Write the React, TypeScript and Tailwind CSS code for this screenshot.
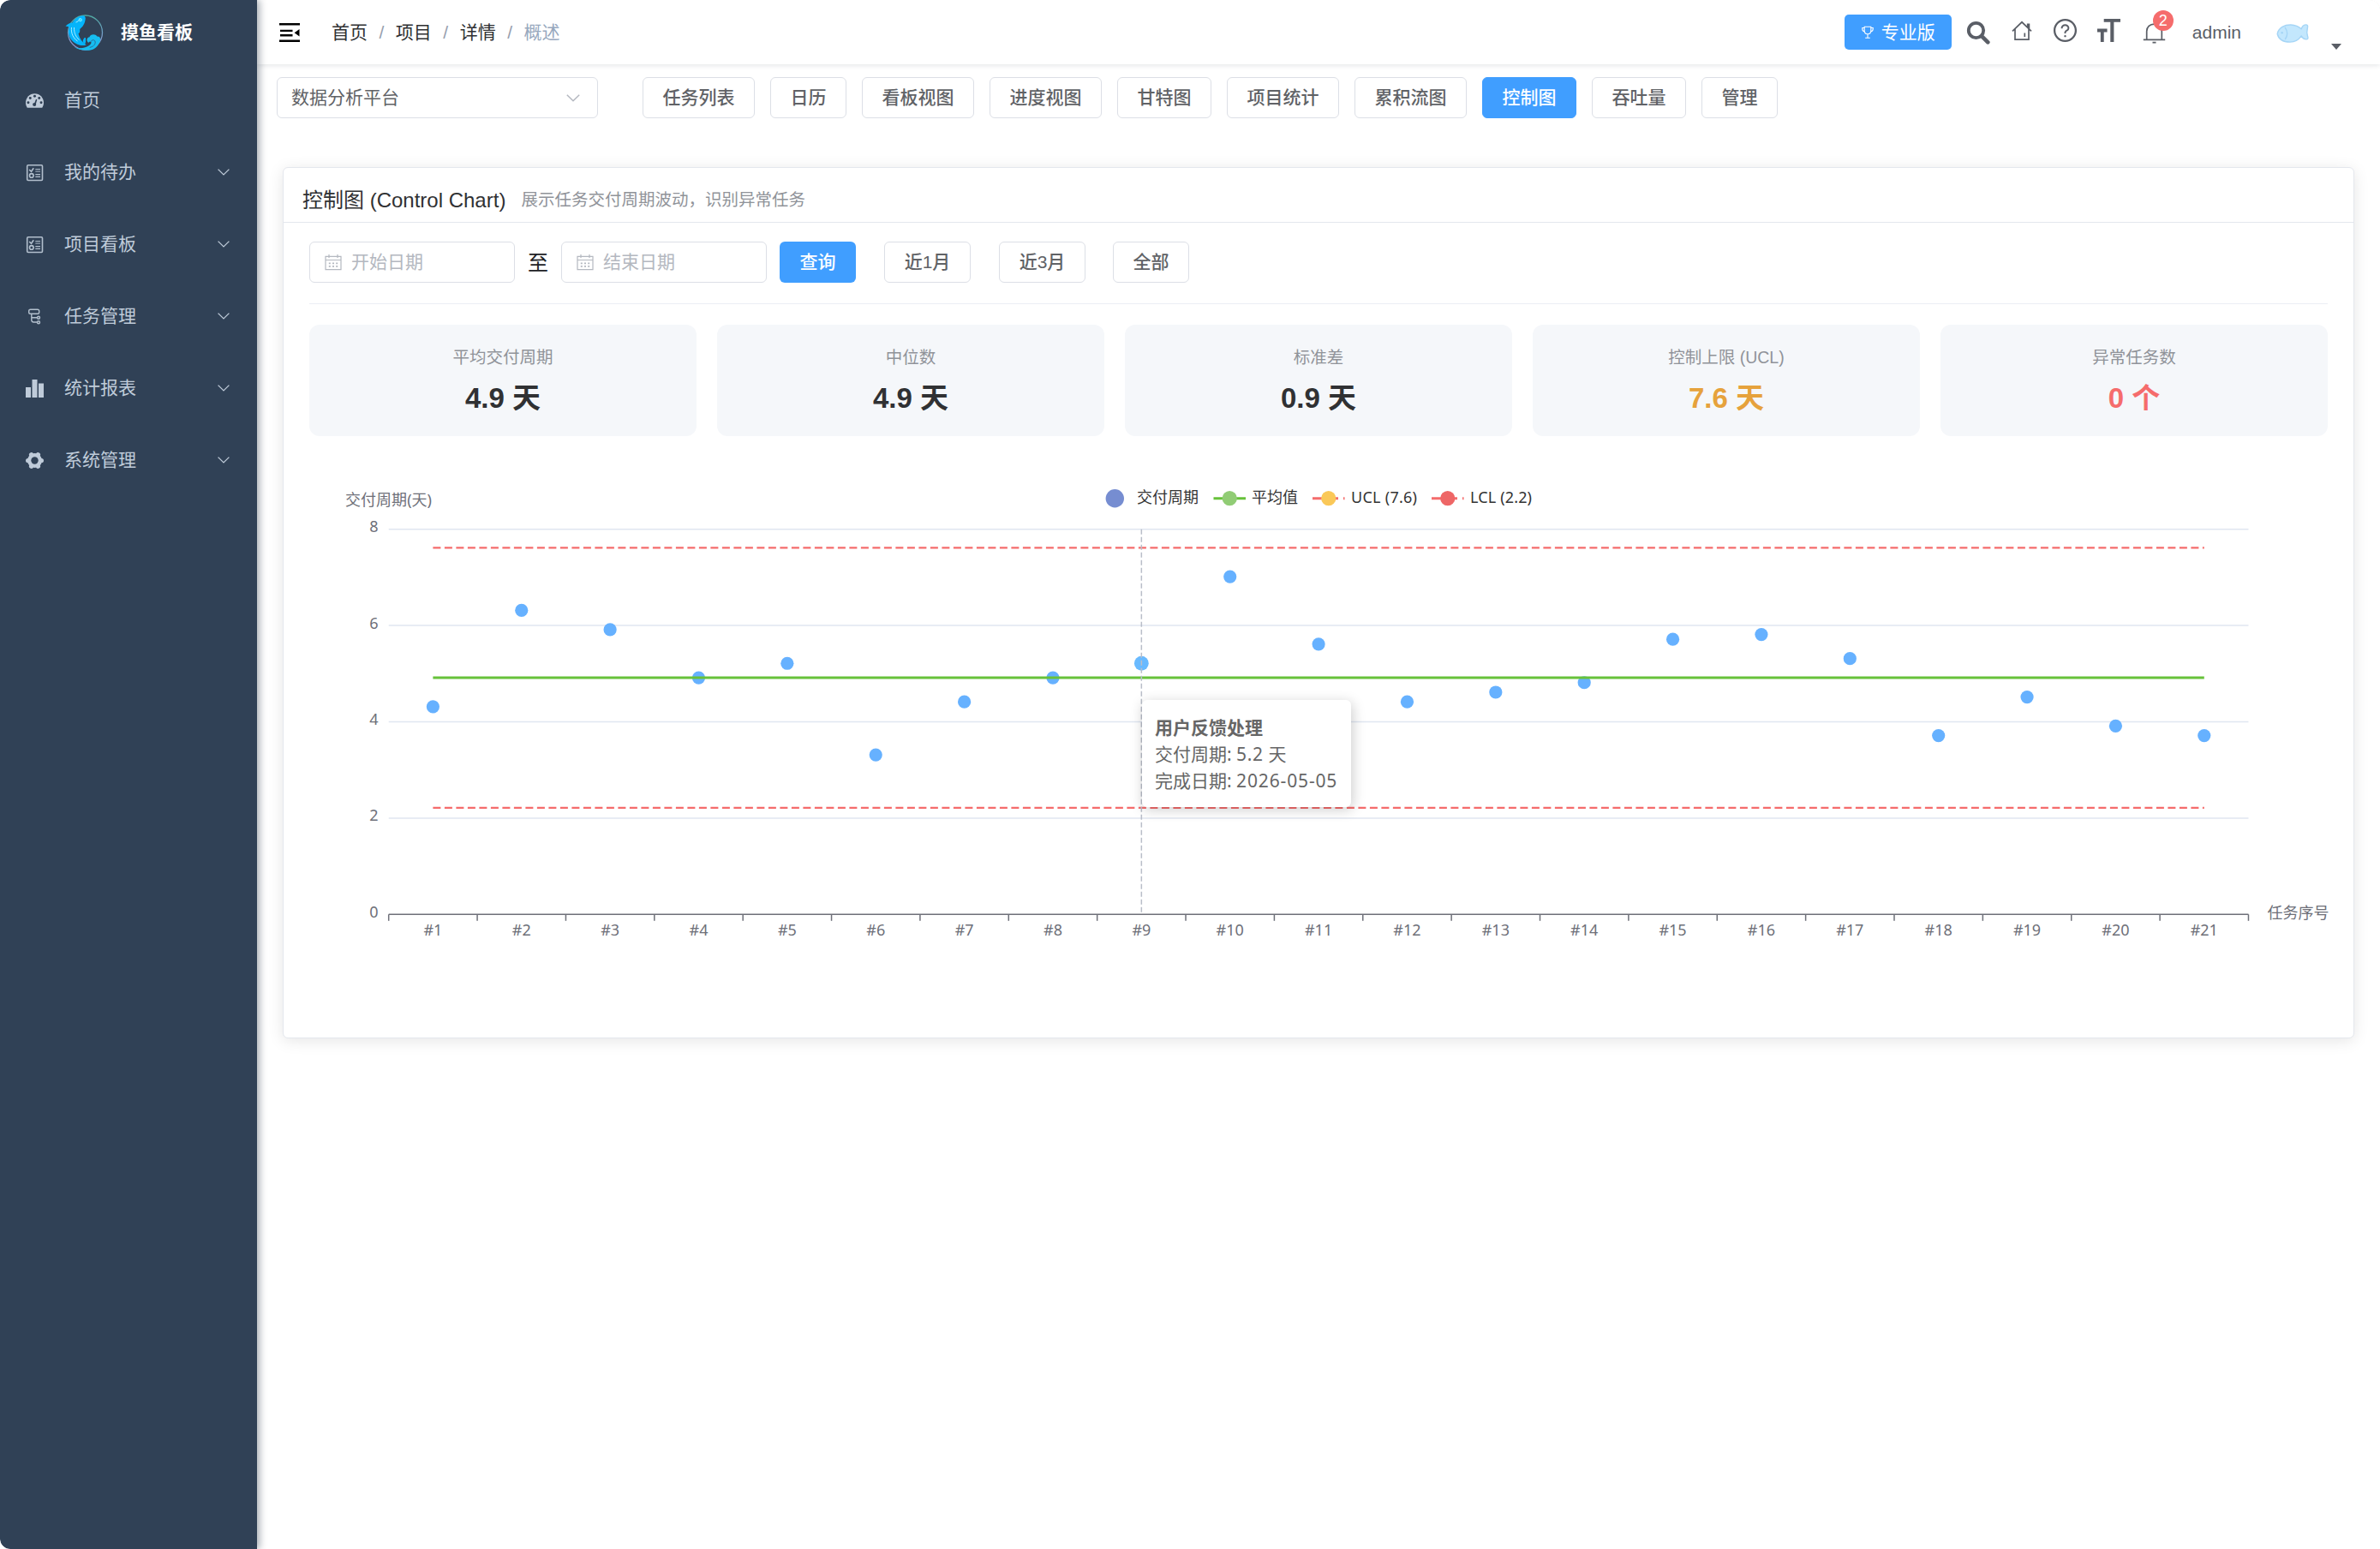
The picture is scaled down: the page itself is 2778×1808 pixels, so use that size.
import React from "react";
import { AiOutlineQuestionCircle } from "react-icons/ai";

const DashboardIcon = () => (
  <svg viewBox="0 0 128 100" className="h-[17px] w-[21px]">
    <path
      d="M128 64c0 12.500-3.300 23.500-9.900 34.300-.7 1.100-1.800 1.700-3.100 1.700H13c-1.300 0-2.400-.6-3.100-1.700C3.300 87.700 0 76.300 0 64 0 28.700 28.700 0 64 0s64 28.700 64 64z"
      fill="#bfcbd9"
    />
    <g fill="#304156">
      <circle cx="18" cy="63.600" r="9" />
      <circle cx="32" cy="32" r="9" />
      <circle cx="64" cy="18.500" r="9" />
      <circle cx="96" cy="32" r="9" />
      <circle cx="110" cy="63.600" r="9" />
      <circle cx="62" cy="77" r="12.500" />
      <path d="M73 40l8 2-10 35-11-3z" />
    </g>
  </svg>
);

const ChecklistIcon = () => (
  <svg viewBox="0 0 21 21" className="size-[21px]" fill="none" stroke="#b2bfcd" strokeWidth="1.600">
    <rect x="1.700" y="1.700" width="17.800" height="17.800" rx="1.200" />
    <path d="M4.200 7l2.300 2.300L9.200 5.200" />
    <circle cx="6.800" cy="13.900" r="2.300" />
    <path d="M11.300 6.500h5.700M11.300 9h5.700M11.300 12.700h5.700M11.300 15.300h5.700" strokeWidth="1.200" />
  </svg>
);

const TreeIcon = () => (
  <svg viewBox="0 0 21 21" className="size-[21px]" fill="none" stroke="#b2bfcd" strokeWidth="1.400">
    <rect x="3.700" y="2.200" width="12" height="5" rx="1.800" />
    <path d="M6.800 7.200v7.400q0 2.400 2.400 2.400h4M6.800 11.700h6.400" />
    <circle cx="15" cy="11.700" r="1.500" />
    <circle cx="15" cy="17.300" r="1.500" />
  </svg>
);

const BarsIcon = () => (
  <svg viewBox="0 0 128 128" className="size-[21px]" fill="#bfcbd9">
    <path d="M0 54.857h36.571V128H0V54.857zM91.429 27.430H128V128H91.429V27.429zM45.714 0h36.572v128H45.714V0z" />
  </svg>
);

const GearIcon = () => (
  <svg viewBox="0 0 21 21" className="size-[21px]" fill="#bfcbd9">
    <circle cx="10.500" cy="10.500" r="8.500" />
    <g stroke="#bfcbd9" strokeWidth="5.200" strokeLinecap="round">
      <path d="M2.600 10.500h15.800M6.550 3.660l7.900 13.680M14.450 3.660l-7.900 13.680" />
    </g>
    <circle cx="10.500" cy="10.500" r="4.200" fill="#304156" />
  </svg>
);

const Chevron = ({ className }: { className?: string }) => (
  <svg viewBox="0 0 14 8" className={className} fill="none" stroke="currentColor" strokeWidth="1.300">
    <path d="M.6.6L7 6.900 13.400.6" />
  </svg>
);

const LogoIcon = () => (
  <svg viewBox="0 0 46 46" className="size-[46px]">
    <defs>
      <linearGradient id="ring" x1="0" y1="0" x2="0" y2="1">
        <stop offset="0" stopColor="#4fa8a0" />
        <stop offset=".5" stopColor="#6f9fc4" />
        <stop offset="1" stopColor="#a08fd0" />
      </linearGradient>
    </defs>
    <circle cx="23.500" cy="23" r="20" fill="none" stroke="url(#ring)" strokeWidth="1.300" />
    <path
      d="M21.500 3.200c-5.500.6-10.200 3.200-13 8.300-2.500.3-5.300 1.300-8 4 1.800.2 3.300.5 4.200 1.200-2.300 8.200 1 15.200 7.700 19 3.800 2.200 9 3.300 12.300 1.500-4.700-2.700-7.700-7-9.200-13 1.500-.5 2-2.500 1.700-5.200 3.800-2.800 6.300-7.300 6.600-13-.4-1.700-1.300-2.600-2.300-2.800z"
      fill="#04b4fb"
    />
    <path d="M22.600 29c-2.600 3.500-2.400 5.300.4 7.600 1.500-1.900 1-5 .9-7.600z" fill="#04b4fb" />
    <path
      d="M10.500 39.500c5.500 2.800 11.500 2.200 16.500-.7 2.900-1.700 4-3.300 3.300-4.700-.9-1.600-3.200-.2-2.600 1-3.300-1.600-2.700-6.500.8-6.800.6-3.500 6.800-4.600 8.900-.7 3.900-.3 4.200 3.200 3.100 6.400C36.700 42.200 31 44 25.500 43.700c-6 .1-11-1.200-15-4.200z"
      fill="#16bdf0"
    />
    <path d="M7.500 17c-.8 7 2 12.500 7 16M10.500 17c-.2 6 1.800 11 6 14.500M17 6.500c-.5 2.500-2.500 4.200-4.500 4.500" fill="none" stroke="#b8f1ff" strokeWidth=".9" />
    <circle cx="17.800" cy="8.200" r="1.700" fill="#31dcff" stroke="#c8f6ff" strokeWidth=".5" />
    <path d="M30.500 33.500c.2-2.500 4.500-2.500 4.700.5.200 3.500-3 5.500-6.500 6.500" fill="none" stroke="#2a6f9a" strokeWidth="1" />
  </svg>
);

const FoldIcon = () => (
  <svg viewBox="0 0 24 22" className="ml-[26px] h-[22px] w-6">
    <path d="M0 0h24v2.500H0zM1 7.700h14.500v2.400H1zM1 13h14.500v2.400H1zM0 19.400h24v2.500H0zM23.500 7v8.600L17.600 11.300z" />
  </svg>
);

const TrophyIcon = () => (
  <svg viewBox="0 0 16 18" className="h-[18px] w-4" fill="none" stroke="#fff" strokeWidth="1.100">
    <path d="M4.200 2.200h7.600v4.600c0 2.400-1.600 4-3.800 4s-3.800-1.600-3.800-4zM4.200 3.500H1.800v1.600c0 1.500 1 2.500 2.600 2.800M11.800 3.500h2.400v1.600c0 1.500-1 2.500-2.600 2.800M8 10.800v4M5.200 15.300h5.600" />
  </svg>
);

const SearchIcon = () => (
  <svg viewBox="0 0 28 28" className="size-7" fill="none" stroke="#5a5e66">
    <circle cx="11.500" cy="11.500" r="8.700" strokeWidth="3.800" />
    <path d="M18.300 18.300l7 7" strokeWidth="4.600" strokeLinecap="round" />
  </svg>
);

const HouseIcon = () => (
  <svg viewBox="0 0 24 24" className="size-6" fill="none" stroke="#5a5e66" strokeWidth="1.700">
    <path d="M1 12.300L12 1.800l11 10.500M4 10v12.200h16V10M18.700 8V4.300h1.700V9.700M15.300 14.500v4.500" />
  </svg>
);

const TextSizeIcon = () => (
  <svg viewBox="0 0 128 128" className="size-[27px]" fill="#5a5e66">
    <path d="M0 54.857h54.796v18.286H36.531V128H18.265V73.143H0V54.857zm127.857-36.571H91.935V128H72.456V18.286H36.534V0h91.326v18.286z" />
  </svg>
);

const BellIcon = () => (
  <svg viewBox="0 0 27 27" className="size-[27px]" fill="none" stroke="#5a5e66" strokeWidth="1.700">
    <path d="M4.700 22V12.500c0-5 3.800-8.300 8.800-8.300s8.800 3.300 8.800 8.300V22M.8 22.300h25.400M11.500 25.700h4" />
  </svg>
);

const FishIcon = () => (
  <svg viewBox="0 0 38 24" className="h-6 w-[38px]" stroke="#a5d5f6" strokeWidth="1.400" strokeLinejoin="round">
    <path
      d="M1.200 12.500C2.500 5 10 1.800 17 2c5 .2 9 1.800 12.200 4.800.8-2.700 2.600-4.600 5-4.900 2.400-.1 2.800 1.600 2.200 3.700-1 4-1 6.600.2 9.800.8 2.200.2 3.600-1.600 3.500-2.800-.2-4.800-1.900-5.800-4-3.200 4.700-8 7.200-13.200 7.200C8.500 22 2.500 18.800 1.200 12.500z"
      fill="#c3e7fd"
    />
    <path d="M10 4.800c3.300 4.500 3.300 9.800.2 14.200" fill="none" />
    <circle cx="6.600" cy="11.300" r=".6" />
  </svg>
);

const CalendarIcon = () => (
  <svg viewBox="0 0 20 20" className="size-5" fill="none" stroke="#b4b8c0" strokeWidth="1.200">
    <path d="M1 3.300h18v15.400H1zM1 7.500h18M5 1v4M15 1v4" />
    <path d="M4.800 11.300h2M9 11.300h2M13.200 11.300h2M4.800 14.900h2M9 14.900h2M13.200 14.900h2" strokeWidth="1.700" />
  </svg>
);

const menu = [
  { label: "首页", icon: <DashboardIcon />, sub: false },
  { label: "我的待办", icon: <ChecklistIcon />, sub: true },
  { label: "项目看板", icon: <ChecklistIcon />, sub: true },
  { label: "任务管理", icon: <TreeIcon />, sub: true },
  { label: "统计报表", icon: <BarsIcon />, sub: true },
  { label: "系统管理", icon: <GearIcon />, sub: true },
];

const tabs = ["任务列表", "日历", "看板视图", "进度视图", "甘特图", "项目统计", "累积流图", "控制图", "吞吐量", "管理"];

const stats = [
  { label: "平均交付周期", value: "4.9 天", color: "text-[#303133]" },
  { label: "中位数", value: "4.9 天", color: "text-[#303133]" },
  { label: "标准差", value: "0.9 天", color: "text-[#303133]" },
  { label: "控制上限 (UCL)", value: "7.6 天", color: "text-[#e6a23c]" },
  { label: "异常任务数", value: "0 个", color: "text-[#f56c6c]" },
];

const cycleTimes = [4.3, 6.3, 5.9, 4.9, 5.2, 3.3, 4.4, 4.9, 5.2, 7, 5.6, 4.4, 4.6, 4.8, 5.7, 5.8, 5.3, 3.7, 4.5, 3.9, 3.7];

const Sidebar = () => (
  <aside className="relative z-20 flex w-[300px] shrink-0 flex-col rounded-l-xl bg-[#304156] shadow-[3px_0_9px_rgba(0,21,41,0.35)]">
    <div className="flex h-[75px] items-center pl-[76px]">
      <LogoIcon />
      <h1 className="ml-[19px] text-[21px] leading-none font-bold text-white">摸鱼看板</h1>
    </div>
    <nav>
      {menu.map((m) => (
        <div key={m.label} className="flex h-[84px] items-center pr-8 pl-[30px] text-[21px] text-[#bfcbd9]">
          <span className="flex w-[45px] items-center">{m.icon}</span>
          <span className="grow">{m.label}</span>
          {m.sub && <Chevron className="h-2 w-[14px]" />}
        </div>
      ))}
    </nav>
  </aside>
);

const Crumb = ({ children, last }: { children: string; last?: boolean }) => (
  <span className="flex items-center">
    <span className={last ? "text-[#97a8be]" : "text-[#303133]"}>{children}</span>
    {!last && <span className="mx-[13.500px] text-[#97a0ae]">/</span>}
  </span>
);

const Header = () => (
  <header className="relative z-10 flex h-[75px] shrink-0 items-center rounded-tr-xl bg-white shadow-[0_1px_6px_rgba(0,21,41,0.12)]">
    <FoldIcon />
    <div className="ml-[37px] flex text-[21px]">
      <Crumb>首页</Crumb>
      <Crumb>项目</Crumb>
      <Crumb>详情</Crumb>
      <Crumb last>概述</Crumb>
    </div>
    <div className="ml-auto flex items-center pr-[45px]">
      <button className="flex h-[41px] w-[125px] items-center justify-center gap-2 rounded-[5px] bg-[#409eff] text-[21px] text-white">
        <TrophyIcon />
        专业版
      </button>
      <span className="ml-[17px]"><SearchIcon /></span>
      <span className="ml-[25px] pb-1"><HouseIcon /></span>
      <AiOutlineQuestionCircle className="mb-1 ml-[23px] size-[31px] text-[#5a5e66]" />
      <span className="ml-[22px] pb-1"><TextSizeIcon /></span>
      <span className="relative ml-[26px]">
        <BellIcon />
        <span className="absolute -top-[12px] left-[12px] flex size-6 items-center justify-center rounded-full bg-[#f56c6c] text-lg leading-none text-white">2</span>
      </span>
      <span className="ml-[31px] text-[21px] text-[#5a5e66]">admin</span>
      <span className="mt-[3px] ml-[41px]"><FishIcon /></span>
      <span className="mt-[34px] ml-[26px] h-0 w-0 border-x-[6px] border-t-[7px] border-x-transparent border-t-[#5a5e66]" />
    </div>
  </header>
);

const Toolbar = () => (
  <div className="flex items-center pt-[15px] pl-[23px]">
    <div className="flex h-12 w-[375px] items-center justify-between rounded-md border border-[#dcdfe6] pr-[20px] pl-4 text-[21px] text-[#606266]">
      数据分析平台
      <Chevron className="h-[9px] w-4 text-[#b4b8c0]" />
    </div>
    <div className="ml-[52px] flex gap-[18px]">
      {tabs.map((t) => (
        <button
          key={t}
          className={
            t === "控制图"
              ? "h-12 rounded-md border border-[#409eff] bg-[#409eff] px-[22.500px] text-[21px] font-medium text-white"
              : "h-12 rounded-md border border-[#dcdfe6] bg-white px-[22.500px] text-[21px] font-medium text-[#606266]"
          }
        >
          {t}
        </button>
      ))}
    </div>
  </div>
);

const DateField = ({ label }: { label: string }) => (
  <div className="flex h-12 w-[240px] items-center gap-[11px] rounded-md border border-[#dcdfe6] pl-[17px] text-[21px] text-[#b4b8c0]">
    <CalendarIcon />
    {label}
  </div>
);

const Filters = () => (
  <div className="flex items-center border-b border-[#ebeef5] pb-6 text-[21px] text-[#606266]">
    <DateField label="开始日期" />
    <span className="mx-[15px] pt-0.5 text-2xl leading-none text-[#202124]">至</span>
    <DateField label="结束日期" />
    <button className="ml-[15px] h-12 rounded-md bg-[#409eff] px-[23.500px] font-medium text-white">查询</button>
    <button className="ml-[33px] h-12 w-[101px] rounded-md border border-[#dcdfe6] font-medium">近1月</button>
    <button className="ml-[33px] h-12 w-[101px] rounded-md border border-[#dcdfe6] font-medium">近3月</button>
    <button className="ml-8 h-12 w-[89px] rounded-md border border-[#dcdfe6] font-medium">全部</button>
  </div>
);

/* Plot geometry inside the 2356 x 600 drawing area. */
const LEFT = 92.7;
const STEP = 103.37;
const BASE = 528.3;
const UNIT = 56.2;
const px = (i: number) => LEFT + (i + 0.5) * STEP;
const py = (v: number) => BASE - v * UNIT;
const dataY = (v: number) => py(v) - 0.8;
const RIGHT = LEFT + 21 * STEP;

const LegendLine = ({ x, line, dot, dash }: { x: number; line: string; dot: string; dash?: string }) => (
  <g>
    <line x1={x} x2={x + 37.5} y1="42.700" y2="42.700" stroke={line} strokeWidth="3" strokeDasharray={dash} />
    <circle cx={x + 18.75} cy="42.700" r="8.600" fill={dot} />
  </g>
);

const ControlChart = () => (
  <div className="relative">
    <svg viewBox="0 0 2356 600" className="h-[600px] w-[2356px] overflow-visible font-['Noto_Sans','Noto_Sans_CJK_SC',sans-serif] text-lg">
      <g fill="#6e7079">
        <text x="42" y="50.500" textLength="101">交付周期(天)</text>
        <text x="2285.500" y="533">任务序号</text>
        {[0, 2, 4, 6, 8].map((v) => (
          <text key={v} x="80.500" y={py(v) + 3.5} textAnchor="end">{v}</text>
        ))}
        {cycleTimes.map((_, i) => (
          <text key={i} x={px(i)} y="553" textAnchor="middle">{"#" + (i + 1)}</text>
        ))}
      </g>
      {[2, 4, 6, 8].map((v) => (
        <line key={v} x1={LEFT} x2={RIGHT} y1={py(v)} y2={py(v)} stroke="#e0e6f1" strokeWidth="1.500" />
      ))}
      <line x1={LEFT} x2={RIGHT} y1={BASE} y2={BASE} stroke="#6e7079" strokeWidth="1.500" />
      {Array.from({ length: 22 }, (_, i) => (
        <line key={i} x1={LEFT + i * STEP} x2={LEFT + i * STEP} y1={BASE} y2={BASE + 7.5} stroke="#6e7079" strokeWidth="1.500" />
      ))}
      {cycleTimes.map((v, i) => (
        <circle key={i} cx={px(i)} cy={dataY(v)} r={i === 8 ? 8.4 : 7.6} fill={i === 8 ? "#69baff" : "#66b1ff"} />
      ))}
      <line x1={px(0)} x2={px(20)} y1={dataY(4.9)} y2={dataY(4.9)} stroke="#67c23a" strokeWidth="3" />
      <line x1={px(0)} x2={px(20)} y1={dataY(7.6)} y2={dataY(7.6)} stroke="#f56c6c" strokeWidth="2.250" strokeDasharray="9 4.500" />
      <line x1={px(0)} x2={px(20)} y1={dataY(2.2)} y2={dataY(2.2)} stroke="#f56c6c" strokeWidth="2.250" strokeDasharray="9 4.500" />
      <line x1={px(8)} x2={px(8)} y1={py(8)} y2={BASE} stroke="#b9bec9" strokeWidth="1.500" strokeDasharray="6 3" />

      <circle cx="940.300" cy="42.700" r="10.700" fill="#768dd1" />
      <LegendLine x={1055.5} line="#67c23a" dot="#91cc75" />
      <LegendLine x={1171} line="#f56c6c" dot="#fac858" dash="12 6" />
      <LegendLine x={1310} line="#f56c6c" dot="#ee6666" dash="12 6" />
      <g fill="#333">
        <text x="966" y="47.500">交付周期</text>
        <text x="1100" y="47.500">平均值</text>
        <text x="1216" y="47.500" textLength="77">UCL (7.6)</text>
        <text x="1355" y="47.500" textLength="72">LCL (2.2)</text>
      </g>
    </svg>
    <div className="absolute top-[278px] left-[972px] h-[125px] w-[244px] rounded-md bg-white pt-[17px] pl-[15px] font-['Noto_Sans','Noto_Sans_CJK_SC',sans-serif] text-[21px] leading-[31px] whitespace-nowrap text-[#666] shadow-[1.500px_3px_15px_rgba(0,0,0,0.2)]">
      <div className="font-bold">用户反馈处理</div>
      <div>交付周期: <span className="tracking-[0.600px]">5.2 天</span></div>
      <div>完成日期: <span className="tracking-[0.850px]">2026-05-05</span></div>
    </div>
  </div>
);

export default function App() {
  return (
    <div className="flex h-[1808px] w-[2778px] overflow-hidden rounded-xl bg-white font-['Liberation_Sans','Noto_Sans_CJK_SC',sans-serif]">
      <Sidebar />
      <div className="flex grow flex-col">
        <Header />
        <Toolbar />
        <main className="mt-[57px] ml-[30px] h-[1017px] w-[2418px] rounded-md border border-[#e4e7ed] bg-white shadow-[0_3px_18px_rgba(0,0,0,0.1)]">
          <div className="flex h-16 items-center border-b border-[#e4e7ed] pt-[13px] pl-[22px]">
            <h2 className="text-2xl leading-none text-[#303133]">控制图 (Control Chart)</h2>
            <span className="ml-[18px] text-[19.500px] leading-none text-[#909399]">展示任务交付周期波动，识别异常任务</span>
          </div>
          <div className="px-[30px] pt-[22px]">
            <Filters />
            <div className="mt-6 grid grid-cols-5 gap-6">
              {stats.map((s) => (
                <div key={s.label} className="flex h-[130px] flex-col items-center rounded-xl bg-[#f5f7fa] pt-[27px]">
                  <div className="text-[19.500px] leading-[22px] text-[#909399]">{s.label}</div>
                  <div className={"mt-4 text-[33px] leading-[42px] font-bold " + s.color}>{s.value}</div>
                </div>
              ))}
            </div>
            <div className="mt-[30px]">
              <ControlChart />
            </div>
          </div>
        </main>
      </div>
    </div>
  );
}
